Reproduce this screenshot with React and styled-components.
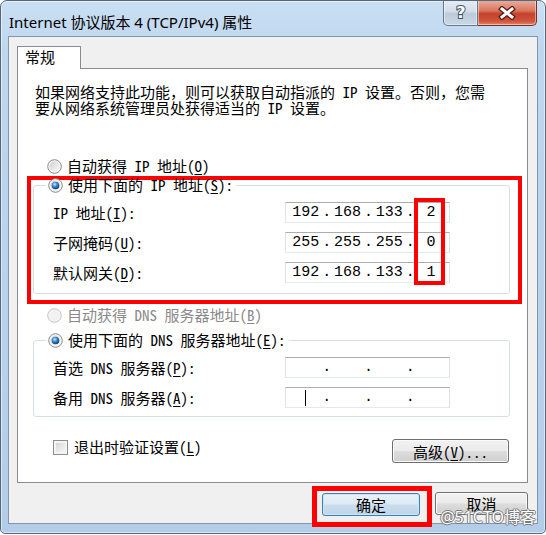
import React from 'react'
import styled, { createGlobalStyle } from 'styled-components'

const UI_FONT = '"Noto Sans Mono CJK SC", "Liberation Mono", "Noto Sans CJK SC", monospace'

const GlobalStyle = createGlobalStyle`
  html, body {
    margin: 0;
    padding: 0;
    background: #fff;
  }
  body {
    font-family: ${UI_FONT};
    font-size: 15px;
    color: #000;
  }
  u {
    text-underline-offset: 2px;
  }
`

const Window = styled.div`
  position: relative;
  width: 546px;
  height: 534px;
  box-sizing: border-box;
  border: 1px solid #55677a;
  border-radius: 7px 7px 5px 5px;
  background: linear-gradient(180deg, #cadff3 0%, #bed6ee 10%, #b9d2ec 60%, #b3cce8 100%);
  box-shadow: inset 0 0 0 1px rgba(255, 255, 255, 0.5);
  display: flex;
  flex-direction: column;
  overflow: hidden;
`

const TitleBar = styled.div`
  height: 35px;
  display: flex;
  justify-content: space-between;
  align-items: flex-start;
  padding: 0 8px 0 8px;
`

const Title = styled.div`
  padding-top: 11px;
  font: 15px/20px "Noto Sans", "Noto Sans CJK SC", sans-serif;
  color: #000;
`

const CaptionButtons = styled.div`
  display: flex;
  margin-top: -1px;
`

const CaptionBtn = styled.div`
  width: ${p => p.$w}px;
  height: 26px;
  box-sizing: border-box;
  display: flex;
  align-items: center;
  justify-content: center;
  border: 1px solid ${p => (p.$close ? '#7a2e22' : '#66788b')};
  border-top: none;
  border-left-width: ${p => (p.$close ? 0 : 1)}px;
  border-radius: ${p => (p.$close ? '0 0 5px 0' : '0 0 0 5px')};
  background: ${p =>
    p.$close
      ? 'linear-gradient(180deg, #eab0a2 0%, #d9785f 42%, #c5422b 55%, #cf553c 85%, #df8a71 100%)'
      : 'linear-gradient(180deg, #e6edf5 0%, #d4dee9 45%, #bccbdb 55%, #cad7e5 100%)'};
  box-shadow: inset 0 0 0 1px rgba(255, 255, 255, 0.45);
`

const Client = styled.div`
  margin: 0 7px;
  height: 488px;
  box-sizing: border-box;
  border: 1px solid #8496aa;
  background: #f0f0f0;
  padding: 9px 0 0 8px;
`

const Tab = styled.div`
  position: relative;
  z-index: 1;
  width: 64px;
  height: 23px;
  box-sizing: border-box;
  border: 1px solid #898c95;
  border-bottom: none;
  background: #fff;
  margin-bottom: -1px;
  padding: 1px 0 0 7px;
  line-height: 18px;
`

const Panel = styled.div`
  width: 511px;
  height: 415px;
  box-sizing: border-box;
  border: 1px solid #898c95;
  background: #fff;
  display: flex;
  flex-direction: column;
  align-items: flex-start;
`

const Description = styled.div`
  margin: 15px 0 0 17px;
  line-height: 16px;
  white-space: nowrap;
  span {
    display: block;
  }
`

const RadioRow = styled.div`
  display: flex;
  align-items: center;
  gap: 5px;
  height: 16px;
  line-height: 16px;
  margin: ${p => p.$mt || 0}px 0 0 29px;
  color: ${p => (p.$disabled ? '#8a8a8a' : '#000')};
  white-space: nowrap;
`

const MarkFrame = styled.div`
  box-sizing: border-box;
  border: ${p => p.$w}px solid #ff0000;
`

const GroupMark = styled(MarkFrame)`
  width: 495px;
  margin: 2px 0 0 9px;
  padding: 0 8px 6px 2px;
`

const Group = styled.fieldset`
  width: 477px;
  box-sizing: border-box;
  margin: ${p => p.$mt}px 0 0 ${p => p.$ml}px;
  border: 1px solid #d5dfe5;
  border-radius: 3px;
  padding: 9px 0 ${p => p.$pb}px 19px;
  min-width: 0;
`

const GroupLegend = styled.legend`
  margin-left: -7px;
  padding: 0 3px 0 2px;
  display: flex;
  align-items: center;
  gap: 5px;
  height: 16px;
  line-height: 16px;
  white-space: nowrap;
`

const FieldGrid = styled.div`
  position: relative;
  display: grid;
  grid-template-columns: 232px 165px;
  row-gap: 9px;
  align-items: center;
`

const FieldLabel = styled.div`
  line-height: 21px;
  white-space: nowrap;
`

const IpBox = styled.div`
  width: 165px;
  height: 21px;
  box-sizing: border-box;
  border: 1px solid;
  border-color: #abadb3 #dbdfe6 #e3e9ef #e2e3ea;
  background: #fff;
  display: flex;
  align-items: center;
  padding-left: 2px;
  font-family: "Liberation Mono", monospace;
`

const Seg = styled.span`
  width: 36px;
  display: flex;
  justify-content: center;
  align-items: center;
`

const Dot = styled.span`
  width: 6px;
  display: flex;
  justify-content: center;
`

const Caret = styled.span`
  width: 1px;
  height: 16px;
  background: #000;
`

const ColumnMark = styled(MarkFrame)`
  position: absolute;
  left: 361px;
  top: -4px;
  width: 31px;
  height: 87px;
  pointer-events: none;
`

const OptionsRow = styled.div`
  margin: 22px 0 0 35px;
  width: 456px;
  display: flex;
  justify-content: space-between;
  align-items: flex-start;
`

const CheckRow = styled.label`
  display: flex;
  align-items: center;
  gap: 6px;
  line-height: 16px;
  white-space: nowrap;
`

const CheckBox = styled.span`
  width: 15px;
  height: 15px;
  box-sizing: border-box;
  border: 1px solid #8e8f8f;
  background: linear-gradient(135deg, #cdcdcd 0%, #e9e9e9 55%, #f9f9f9 100%);
  box-shadow: inset 0 0 0 2px #f4f4f4;
`

const Button = styled.button`
  width: ${p => p.$w}px;
  height: ${p => p.$h}px;
  margin-top: ${p => p.$mt || 0}px;
  box-sizing: border-box;
  padding: 0;
  font-family: ${UI_FONT};
  font-size: 15px;
  color: #000;
  border: 1px solid ${p => (p.$default ? '#3c7fb1' : '#707070')};
  border-radius: 3px;
  background: ${p =>
    p.$default
      ? 'linear-gradient(180deg, #e8f1f9 0%, #dce9f4 48%, #c9dded 52%, #bed5e9 100%)'
      : 'linear-gradient(180deg, #f2f2f2 0%, #ebebeb 48%, #dddddd 52%, #cfcfcf 100%)'};
  box-shadow: inset 0 0 0 1px ${p => (p.$default ? '#cde6f7' : '#fbfbfb')};
  white-space: nowrap;
`

const Footer = styled.div`
  display: flex;
  justify-content: flex-end;
  align-items: flex-start;
  gap: 3px;
  margin-top: 3px;
  padding-right: 9px;
`

const ButtonMark = styled(MarkFrame)`
  padding: 2px 7px 6px 5px;
`

const Watermark = styled.div`
  position: absolute;
  right: 9px;
  bottom: 7px;
  font: 16px/17px "Noto Sans", "Noto Sans CJK SC", sans-serif;
  color: #fff;
  text-shadow: 1px 0 0 #7a7a7a, -1px 0 0 #7a7a7a, 0 1px 0 #7a7a7a, 0 -1px 0 #7a7a7a;
  pointer-events: none;
`

const Radio = ({ checked, disabled }) => (
  <svg width="15" height="15" viewBox="0 0 15 15">
    <defs>
      <linearGradient id="radioFill" x1="0" y1="0" x2="1" y2="1">
        <stop offset="0" stopColor="#cfcfcf" />
        <stop offset="1" stopColor="#fbfbfb" />
      </linearGradient>
      <radialGradient id="radioDot" cx="0.4" cy="0.35" r="0.65">
        <stop offset="0" stopColor="#c6ecff" />
        <stop offset="0.45" stopColor="#3d8fd3" />
        <stop offset="1" stopColor="#0e3a68" />
      </radialGradient>
    </defs>
    <circle cx="7.5" cy="7.5" r="6.8" fill="#f4f4f4" stroke={disabled ? '#c4c4c4' : '#8b8b8b'} />
    <circle cx="7.5" cy="7.5" r="5" fill={disabled ? '#f2f2f2' : 'url(#radioFill)'} />
    {checked && <circle cx="7.5" cy="7.5" r="3.8" fill="url(#radioDot)" />}
  </svg>
)

const IpField = ({ parts, caret }) => (
  <IpBox>
    {[0, 1, 2, 3].map(i => (
      <React.Fragment key={i}>
        {i > 0 && <Dot>.</Dot>}
        <Seg>{caret && i === 0 ? <Caret /> : parts ? parts[i] : ''}</Seg>
      </React.Fragment>
    ))}
  </IpBox>
)

const Key = ({ children }) => <u>{children}</u>

export default function App() {
  return (
    <>
      <GlobalStyle />
      <Window>
        <TitleBar>
          <Title>Internet 协议版本 4 (TCP/IPv4) 属性</Title>
          <CaptionButtons>
            <CaptionBtn $w={35}>
              <svg width="14" height="19" viewBox="0 0 14 19">
                <text x="7" y="15" textAnchor="middle" fontFamily="DejaVu Sans" fontWeight="bold" fontSize="16" fill="#fff" stroke="#44525f" strokeWidth="2" paintOrder="stroke">?</text>
              </svg>
            </CaptionBtn>
            <CaptionBtn $w={59} $close>
              <svg width="20" height="14" viewBox="0 0 20 14">
                <path d="M5 3 L15 11 M15 3 L5 11" stroke="#5a1d14" strokeWidth="5.5" strokeLinecap="square" />
                <path d="M5 3 L15 11 M15 3 L5 11" stroke="#fff" strokeWidth="3" strokeLinecap="square" />
              </svg>
            </CaptionBtn>
          </CaptionButtons>
        </TitleBar>

        <Client>
          <Tab>常规</Tab>
          <Panel>
            <Description>
              <span>如果网络支持此功能，则可以获取自动指派的 IP 设置。否则，您需</span>
              <span>要从网络系统管理员处获得适当的 IP 设置。</span>
            </Description>

            <RadioRow $mt={42}>
              <Radio />
              <span>自动获得 IP 地址(<Key>O</Key>)</span>
            </RadioRow>

            <GroupMark $w={4}>
              <Group $mt={-3} $ml={0} $pb={10}>
                <GroupLegend>
                  <Radio checked />
                  <span>使用下面的 IP 地址(<Key>S</Key>):</span>
                </GroupLegend>
                <FieldGrid>
                  <FieldLabel>IP 地址(<Key>I</Key>):</FieldLabel>
                  <IpField parts={['192', '168', '133', '2']} />
                  <FieldLabel>子网掩码(<Key>U</Key>):</FieldLabel>
                  <IpField parts={['255', '255', '255', '0']} />
                  <FieldLabel>默认网关(<Key>D</Key>):</FieldLabel>
                  <IpField parts={['192', '168', '133', '1']} />
                  <ColumnMark $w={4} />
                </FieldGrid>
              </Group>
            </GroupMark>

            <RadioRow $mt={3} $disabled>
              <Radio disabled />
              <span>自动获得 DNS 服务器地址(<Key>B</Key>)</span>
            </RadioRow>

            <Group $mt={9} $ml={15} $pb={8}>
              <GroupLegend>
                <Radio checked />
                <span>使用下面的 DNS 服务器地址(<Key>E</Key>):</span>
              </GroupLegend>
              <FieldGrid>
                <FieldLabel>首选 DNS 服务器(<Key>P</Key>):</FieldLabel>
                <IpField />
                <FieldLabel>备用 DNS 服务器(<Key>A</Key>):</FieldLabel>
                <IpField caret />
              </FieldGrid>
            </Group>

            <OptionsRow>
              <CheckRow>
                <CheckBox />
                <span>退出时验证设置(<Key>L</Key>)</span>
              </CheckRow>
              <Button $w={117} $h={24}>高级(<Key>V</Key>)...</Button>
            </OptionsRow>
          </Panel>

          <Footer>
            <ButtonMark $w={5}>
              <Button $w={98} $h={23} $default>确定</Button>
            </ButtonMark>
            <Button $w={93} $h={23} $mt={6}>取消</Button>
          </Footer>
        </Client>

        <Watermark>@51CTO博客</Watermark>
      </Window>
    </>
  )
}
